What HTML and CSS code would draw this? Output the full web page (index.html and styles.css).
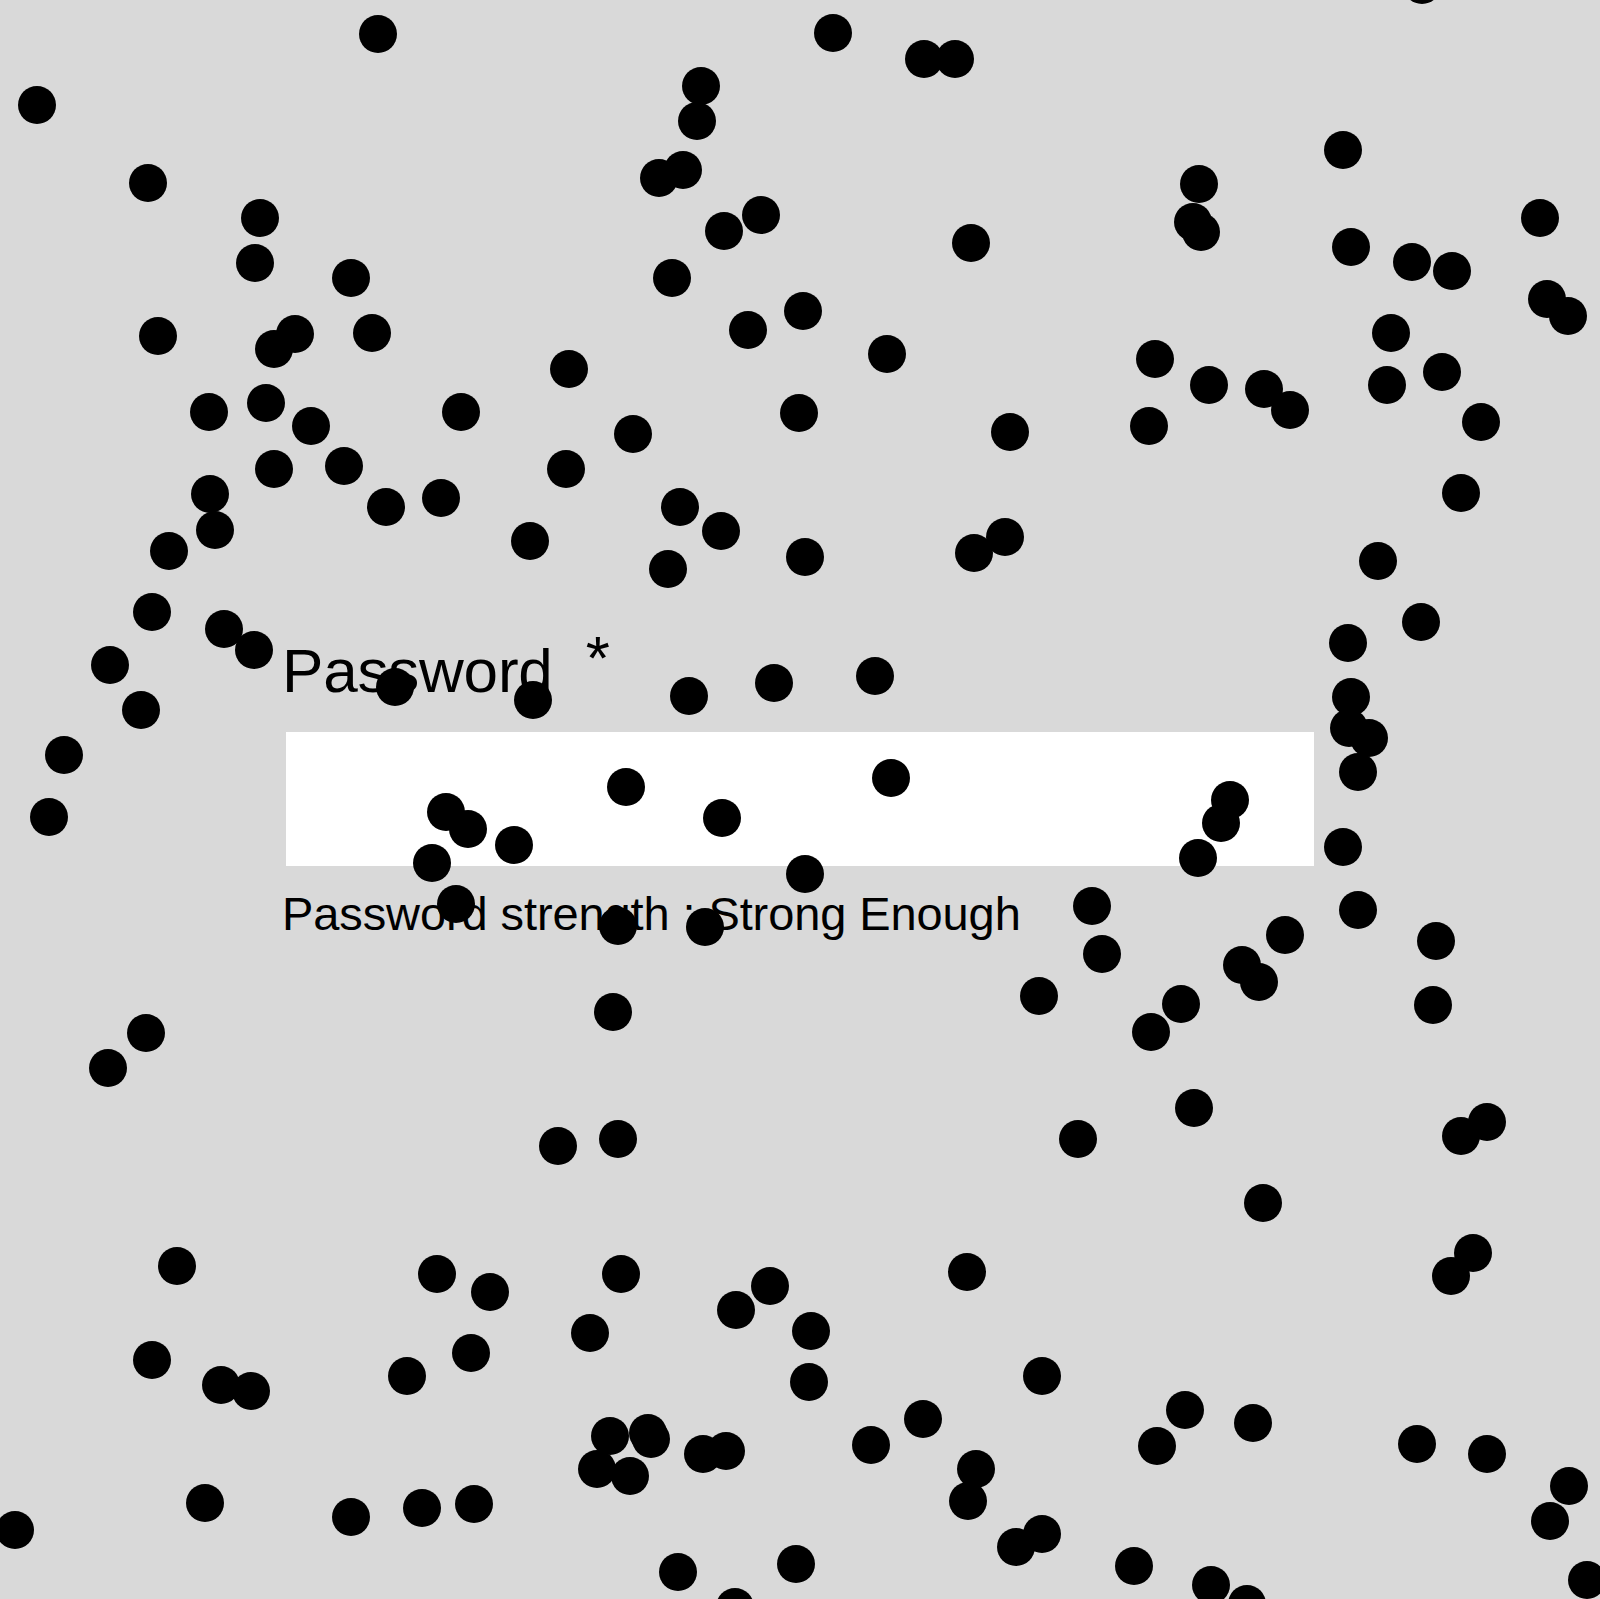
FILE: index.html
```html
<!DOCTYPE html>
<html lang="en">
<head>
<meta charset="utf-8">
<title>Password</title>
<link rel="stylesheet" href="styles.css">
</head>
<body>
<main class="page">
  <form class="field">
    <label class="label" for="pw">Password<span class="req">*</span></label>
    <input class="input" id="pw" type="password">
    <p class="strength">Password strength : Strong Enough</p>
  </form>
  <div class="dots" aria-hidden="true">
    <span class="dot" style="left:359px;top:15px"></span>
    <span class="dot" style="left:814px;top:14px"></span>
    <span class="dot" style="left:905px;top:40px"></span>
    <span class="dot" style="left:936px;top:40px"></span>
    <span class="dot" style="left:1403px;top:-34px"></span>
    <span class="dot" style="left:18px;top:86px"></span>
    <span class="dot" style="left:682px;top:67px"></span>
    <span class="dot" style="left:678px;top:102px"></span>
    <span class="dot" style="left:129px;top:164px"></span>
    <span class="dot" style="left:640px;top:159px"></span>
    <span class="dot" style="left:664px;top:151px"></span>
    <span class="dot" style="left:1324px;top:131px"></span>
    <span class="dot" style="left:1180px;top:165px"></span>
    <span class="dot" style="left:241px;top:199px"></span>
    <span class="dot" style="left:705px;top:212px"></span>
    <span class="dot" style="left:742px;top:196px"></span>
    <span class="dot" style="left:1174px;top:203px"></span>
    <span class="dot" style="left:1182px;top:213px"></span>
    <span class="dot" style="left:952px;top:224px"></span>
    <span class="dot" style="left:1521px;top:199px"></span>
    <span class="dot" style="left:236px;top:244px"></span>
    <span class="dot" style="left:332px;top:259px"></span>
    <span class="dot" style="left:653px;top:259px"></span>
    <span class="dot" style="left:1332px;top:228px"></span>
    <span class="dot" style="left:1393px;top:243px"></span>
    <span class="dot" style="left:1433px;top:252px"></span>
    <span class="dot" style="left:1528px;top:280px"></span>
    <span class="dot" style="left:1549px;top:297px"></span>
    <span class="dot" style="left:139px;top:317px"></span>
    <span class="dot" style="left:276px;top:315px"></span>
    <span class="dot" style="left:255px;top:330px"></span>
    <span class="dot" style="left:353px;top:314px"></span>
    <span class="dot" style="left:729px;top:311px"></span>
    <span class="dot" style="left:784px;top:292px"></span>
    <span class="dot" style="left:868px;top:335px"></span>
    <span class="dot" style="left:1136px;top:340px"></span>
    <span class="dot" style="left:1372px;top:314px"></span>
    <span class="dot" style="left:550px;top:350px"></span>
    <span class="dot" style="left:1190px;top:366px"></span>
    <span class="dot" style="left:1245px;top:370px"></span>
    <span class="dot" style="left:1271px;top:391px"></span>
    <span class="dot" style="left:1368px;top:366px"></span>
    <span class="dot" style="left:1423px;top:353px"></span>
    <span class="dot" style="left:190px;top:393px"></span>
    <span class="dot" style="left:247px;top:384px"></span>
    <span class="dot" style="left:292px;top:407px"></span>
    <span class="dot" style="left:442px;top:393px"></span>
    <span class="dot" style="left:780px;top:394px"></span>
    <span class="dot" style="left:614px;top:415px"></span>
    <span class="dot" style="left:991px;top:413px"></span>
    <span class="dot" style="left:1130px;top:407px"></span>
    <span class="dot" style="left:1462px;top:403px"></span>
    <span class="dot" style="left:255px;top:450px"></span>
    <span class="dot" style="left:325px;top:447px"></span>
    <span class="dot" style="left:547px;top:450px"></span>
    <span class="dot" style="left:191px;top:475px"></span>
    <span class="dot" style="left:367px;top:488px"></span>
    <span class="dot" style="left:422px;top:479px"></span>
    <span class="dot" style="left:661px;top:488px"></span>
    <span class="dot" style="left:1442px;top:474px"></span>
    <span class="dot" style="left:196px;top:511px"></span>
    <span class="dot" style="left:511px;top:522px"></span>
    <span class="dot" style="left:702px;top:512px"></span>
    <span class="dot" style="left:150px;top:532px"></span>
    <span class="dot" style="left:649px;top:550px"></span>
    <span class="dot" style="left:786px;top:538px"></span>
    <span class="dot" style="left:955px;top:534px"></span>
    <span class="dot" style="left:986px;top:518px"></span>
    <span class="dot" style="left:1359px;top:542px"></span>
    <span class="dot" style="left:133px;top:593px"></span>
    <span class="dot" style="left:205px;top:610px"></span>
    <span class="dot" style="left:235px;top:631px"></span>
    <span class="dot" style="left:1402px;top:603px"></span>
    <span class="dot" style="left:91px;top:646px"></span>
    <span class="dot" style="left:1329px;top:624px"></span>
    <span class="dot" style="left:376px;top:668px"></span>
    <span class="dot" style="left:514px;top:681px"></span>
    <span class="dot" style="left:670px;top:677px"></span>
    <span class="dot" style="left:755px;top:664px"></span>
    <span class="dot" style="left:856px;top:657px"></span>
    <span class="dot" style="left:122px;top:691px"></span>
    <span class="dot" style="left:1332px;top:678px"></span>
    <span class="dot" style="left:1330px;top:709px"></span>
    <span class="dot" style="left:1350px;top:719px"></span>
    <span class="dot" style="left:45px;top:736px"></span>
    <span class="dot" style="left:1339px;top:753px"></span>
    <span class="dot" style="left:607px;top:768px"></span>
    <span class="dot" style="left:872px;top:759px"></span>
    <span class="dot" style="left:1211px;top:781px"></span>
    <span class="dot" style="left:1202px;top:804px"></span>
    <span class="dot" style="left:30px;top:798px"></span>
    <span class="dot" style="left:427px;top:793px"></span>
    <span class="dot" style="left:449px;top:810px"></span>
    <span class="dot" style="left:495px;top:826px"></span>
    <span class="dot" style="left:703px;top:799px"></span>
    <span class="dot" style="left:413px;top:844px"></span>
    <span class="dot" style="left:1179px;top:839px"></span>
    <span class="dot" style="left:1324px;top:828px"></span>
    <span class="dot" style="left:786px;top:855px"></span>
    <span class="dot" style="left:437px;top:885px"></span>
    <span class="dot" style="left:599px;top:907px"></span>
    <span class="dot" style="left:686px;top:908px"></span>
    <span class="dot" style="left:1073px;top:887px"></span>
    <span class="dot" style="left:1339px;top:891px"></span>
    <span class="dot" style="left:1083px;top:935px"></span>
    <span class="dot" style="left:1266px;top:916px"></span>
    <span class="dot" style="left:1417px;top:922px"></span>
    <span class="dot" style="left:1223px;top:946px"></span>
    <span class="dot" style="left:1240px;top:963px"></span>
    <span class="dot" style="left:1020px;top:977px"></span>
    <span class="dot" style="left:1162px;top:985px"></span>
    <span class="dot" style="left:1414px;top:986px"></span>
    <span class="dot" style="left:594px;top:993px"></span>
    <span class="dot" style="left:127px;top:1014px"></span>
    <span class="dot" style="left:1132px;top:1013px"></span>
    <span class="dot" style="left:89px;top:1049px"></span>
    <span class="dot" style="left:1175px;top:1089px"></span>
    <span class="dot" style="left:1442px;top:1117px"></span>
    <span class="dot" style="left:1468px;top:1103px"></span>
    <span class="dot" style="left:539px;top:1127px"></span>
    <span class="dot" style="left:599px;top:1120px"></span>
    <span class="dot" style="left:1059px;top:1120px"></span>
    <span class="dot" style="left:1244px;top:1184px"></span>
    <span class="dot" style="left:158px;top:1247px"></span>
    <span class="dot" style="left:418px;top:1255px"></span>
    <span class="dot" style="left:471px;top:1273px"></span>
    <span class="dot" style="left:602px;top:1255px"></span>
    <span class="dot" style="left:948px;top:1253px"></span>
    <span class="dot" style="left:1454px;top:1234px"></span>
    <span class="dot" style="left:1432px;top:1257px"></span>
    <span class="dot" style="left:751px;top:1267px"></span>
    <span class="dot" style="left:717px;top:1291px"></span>
    <span class="dot" style="left:571px;top:1314px"></span>
    <span class="dot" style="left:792px;top:1312px"></span>
    <span class="dot" style="left:133px;top:1341px"></span>
    <span class="dot" style="left:452px;top:1334px"></span>
    <span class="dot" style="left:388px;top:1357px"></span>
    <span class="dot" style="left:202px;top:1366px"></span>
    <span class="dot" style="left:232px;top:1372px"></span>
    <span class="dot" style="left:790px;top:1363px"></span>
    <span class="dot" style="left:1023px;top:1357px"></span>
    <span class="dot" style="left:1166px;top:1391px"></span>
    <span class="dot" style="left:1234px;top:1404px"></span>
    <span class="dot" style="left:904px;top:1400px"></span>
    <span class="dot" style="left:591px;top:1417px"></span>
    <span class="dot" style="left:629px;top:1414px"></span>
    <span class="dot" style="left:632px;top:1420px"></span>
    <span class="dot" style="left:578px;top:1450px"></span>
    <span class="dot" style="left:611px;top:1457px"></span>
    <span class="dot" style="left:684px;top:1435px"></span>
    <span class="dot" style="left:707px;top:1432px"></span>
    <span class="dot" style="left:852px;top:1426px"></span>
    <span class="dot" style="left:957px;top:1450px"></span>
    <span class="dot" style="left:1138px;top:1427px"></span>
    <span class="dot" style="left:1398px;top:1425px"></span>
    <span class="dot" style="left:1468px;top:1435px"></span>
    <span class="dot" style="left:949px;top:1482px"></span>
    <span class="dot" style="left:186px;top:1484px"></span>
    <span class="dot" style="left:332px;top:1498px"></span>
    <span class="dot" style="left:403px;top:1489px"></span>
    <span class="dot" style="left:455px;top:1485px"></span>
    <span class="dot" style="left:-4px;top:1511px"></span>
    <span class="dot" style="left:1550px;top:1467px"></span>
    <span class="dot" style="left:1531px;top:1502px"></span>
    <span class="dot" style="left:997px;top:1528px"></span>
    <span class="dot" style="left:1023px;top:1515px"></span>
    <span class="dot" style="left:1115px;top:1547px"></span>
    <span class="dot" style="left:659px;top:1553px"></span>
    <span class="dot" style="left:777px;top:1545px"></span>
    <span class="dot" style="left:1192px;top:1566px"></span>
    <span class="dot" style="left:1228px;top:1585px"></span>
    <span class="dot" style="left:716px;top:1588px"></span>
    <span class="dot" style="left:1568px;top:1561px"></span>
  </div>
</main>
</body>
</html>
```
FILE: styles.css
```css
html, body {
  margin: 0;
  padding: 0;
  overflow: hidden;
  background: #d9d9d9;
}

.page {
  position: relative;
  width: 1600px;
  height: 1599px;
  overflow: hidden;
  font-family: "Liberation Sans", Arial, Helvetica, sans-serif;
  color: #000;
}

.field {
  display: flex;
  flex-direction: column;
  align-items: flex-start;
  margin: 0;
  padding: 640px 0 0 286px;
}

.label {
  display: block;
  margin-left: -4px;
  font-size: 62px;
  line-height: 62px;
  letter-spacing: -0.2px;
}

.req {
  display: inline-block;
  margin-left: 33px;
  line-height: 0;
  vertical-align: 13px;
}

.input {
  display: block;
  box-sizing: border-box;
  width: 1028px;
  height: 134px;
  margin: 30px 0 0;
  padding: 0;
  border: 0;
  outline: none;
  background: #fff;
}

.strength {
  margin: 24px 0 0 -4px;
  font-size: 47px;
  line-height: 47px;
  letter-spacing: -0.1px;
}

.dots {
  position: absolute;
  inset: 0;
  overflow: hidden;
  pointer-events: none;
}

.dot {
  position: absolute;
  width: 38px;
  height: 38px;
  border-radius: 50%;
  background: #000;
}
```
